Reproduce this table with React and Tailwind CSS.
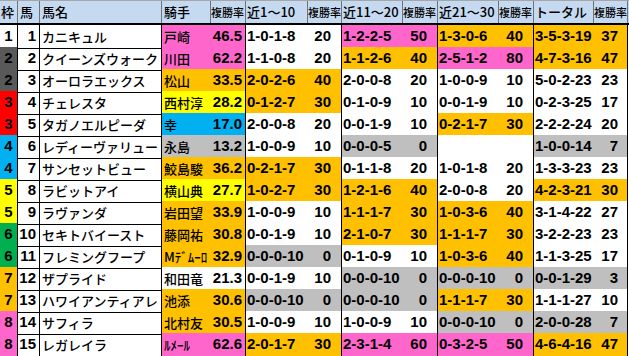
const jp = "font-['Noto_Sans_CJK_JP',sans-serif]";
const num = "font-['Liberation_Sans','Noto_Sans_CJK_JP',sans-serif] font-bold";

const bg = {
  w: "bg-white",
  p: "bg-[#ff66cc]",
  o: "bg-[#ffc000]",
  y: "bg-[#ffff00]",
  b: "bg-[#00b0f0]",
  g: "bg-[#bfbfbf]",
};

const waku = {
  1: "bg-white",
  2: "bg-[#595959]",
  3: "bg-[#ff0000]",
  4: "bg-[#00b0f0]",
  5: "bg-[#ffff00]",
  6: "bg-[#00b050]",
  7: "bg-[#ffc000]",
  8: "bg-[#ff66cc]",
};

// 枠, 馬, 馬名, 騎手, 色, 複勝率, then 近1~10 / 近11~20 / 近21~30 / トータル
const rows = [
  [1, 1, "カニキュル", "戸崎", "p", "46.5", ["1-0-1-8", "20", "w"], ["1-2-2-5", "50", "p"], ["1-3-0-6", "40", "o"], ["3-5-3-19", "37", "o"]],
  [2, 2, "クイーンズウォーク", "川田", "p", "62.2", ["1-1-0-8", "20", "w"], ["1-1-2-6", "40", "o"], ["2-5-1-2", "80", "p"], ["4-7-3-16", "47", "o"]],
  [2, 3, "オーロラエックス", "松山", "o", "33.5", ["2-0-2-6", "40", "o"], ["2-0-0-8", "20", "w"], ["1-0-0-9", "10", "w"], ["5-0-2-23", "23", "w"]],
  [3, 4, "チェレスタ", "西村淳", "y", "28.2", ["0-1-2-7", "30", "o"], ["0-1-0-9", "10", "w"], ["0-0-1-9", "10", "w"], ["0-2-3-25", "17", "w"]],
  [3, 5, "タガノエルピーダ", "幸", "b", "17.0", ["2-0-0-8", "20", "w"], ["0-0-1-9", "10", "w"], ["0-2-1-7", "30", "o"], ["2-2-2-24", "20", "w"]],
  [4, 6, "レディーヴァリュー", "永島", "g", "13.2", ["1-0-0-9", "10", "w"], ["0-0-0-5", "0", "g"], ["", "", "w"], ["1-0-0-14", "7", "g"]],
  [4, 7, "サンセットビュー", "鮫島駿", "o", "36.2", ["0-2-1-7", "30", "o"], ["0-1-1-8", "20", "w"], ["1-0-1-8", "20", "w"], ["1-3-3-23", "23", "w"]],
  [5, 8, "ラビットアイ", "横山典", "y", "27.7", ["1-0-2-7", "30", "o"], ["1-2-1-6", "40", "o"], ["2-0-0-8", "20", "w"], ["4-2-3-21", "30", "o"]],
  [5, 9, "ラヴァンダ", "岩田望", "o", "33.9", ["1-0-0-9", "10", "w"], ["1-1-1-7", "30", "o"], ["1-0-3-6", "40", "o"], ["3-1-4-22", "27", "w"]],
  [6, 10, "セキトバイースト", "藤岡祐", "o", "30.8", ["0-0-1-9", "10", "w"], ["2-1-0-7", "30", "o"], ["1-1-1-7", "30", "o"], ["3-2-2-23", "23", "w"]],
  [6, 11, "フレミングフープ", "Mﾃﾞﾑｰﾛ", "o", "32.9", ["0-0-0-10", "0", "g"], ["0-1-0-9", "10", "w"], ["1-0-3-6", "40", "o"], ["1-1-3-25", "17", "w"]],
  [7, 12, "ザプライド", "和田竜", "w", "21.3", ["0-0-1-9", "10", "w"], ["0-0-0-10", "0", "g"], ["0-0-0-10", "0", "g"], ["0-0-1-29", "3", "g"]],
  [7, 13, "ハワイアンティアレ", "池添", "o", "30.6", ["0-0-0-10", "0", "g"], ["0-0-0-10", "0", "g"], ["1-1-1-7", "30", "o"], ["1-1-1-27", "10", "w"]],
  [8, 14, "サフィラ", "北村友", "o", "30.5", ["1-0-0-9", "10", "w"], ["1-0-0-9", "10", "w"], ["0-0-0-10", "0", "g"], ["2-0-0-28", "7", "g"]],
  [8, 15, "レガレイラ", "ﾙﾒｰﾙ", "p", "62.6", ["2-0-1-7", "30", "o"], ["2-3-1-4", "60", "p"], ["0-3-2-5", "50", "p"], ["4-6-4-16", "47", "o"]],
];

const cols =
  "grid grid-cols-[18px_22px_122px_49px_35px_62px_34px_61px_35px_61px_35px_60px_34px]";

const headers = [
  ["枠", "text-[13px] pl-px"],
  ["馬", "text-[13px] pl-[2px]"],
  ["馬名", "text-[13px] pl-[2px]"],
  ["騎手", "text-[13px] pl-[2px]"],
  ["複勝率", "text-[11px]"],
  ["近1～10", "text-[13px] pl-px"],
  ["複勝率", "text-[11px]"],
  ["近11～20", "text-[13px] pl-px"],
  ["複勝率", "text-[11px]"],
  ["近21～30", "text-[13px] pl-px"],
  ["複勝率", "text-[11px]"],
  ["トータル", "text-[13px] pl-px"],
  ["複勝率", "text-[11px]"],
];

function Pair({ rec, rate, color, last }) {
  return (
    <>
      <div className={`${bg[color]} ${num} text-[15px] flex items-center pl-px border-b border-black`}>
        {rec}
      </div>
      <div
        className={`${bg[color]} ${num} text-[15px] flex items-center justify-end border-b border-r border-black ${last ? "pr-[9px]" : "pr-[10px]"}`}
      >
        {rate}
      </div>
    </>
  );
}

export default function App() {
  return (
    <div className="w-[629px] h-[356px] bg-white overflow-hidden text-black">
      <div className={`${cols} h-[25px] bg-[#c5d9f1] border-t border-[#a6a6a6] border-b-2 border-b-black`}>
        {headers.map(([label, cls], i) => (
          <div
            key={i}
            className={`${jp} ${cls} font-medium flex items-center whitespace-nowrap overflow-hidden border-r border-[#6b7280]`}
          >
            {label}
          </div>
        ))}
      </div>
      {rows.map(([w, n, name, jockey, jc, jr, ...pairs]) => (
        <div key={n} className={`${cols} h-[22px]`}>
          <div className={`${waku[w]} ${num} text-[15px] flex items-center justify-center border-b border-r border-black`}>
            {w}
          </div>
          <div className={`${num} text-[15px] flex items-center justify-end pr-[3px] border-b border-r border-black`}>
            {n}
          </div>
          <div className={`${jp} text-[13px] font-medium flex items-center pl-[2px] whitespace-nowrap overflow-hidden border-b border-r border-black`}>
            {name}
          </div>
          <div className={`${bg[jc]} ${jp} text-[13px] font-medium flex items-center pl-[2px] whitespace-nowrap border-b border-black`}>
            {jockey}
          </div>
          <div className={`${bg[jc]} ${num} text-[15px] flex items-center justify-end pr-[3px] border-b border-r border-black`}>
            {jr}
          </div>
          {pairs.map(([rec, rate, color], i) => (
            <Pair key={i} rec={rec} rate={rate} color={color} last={i === 3} />
          ))}
        </div>
      ))}
    </div>
  );
}
